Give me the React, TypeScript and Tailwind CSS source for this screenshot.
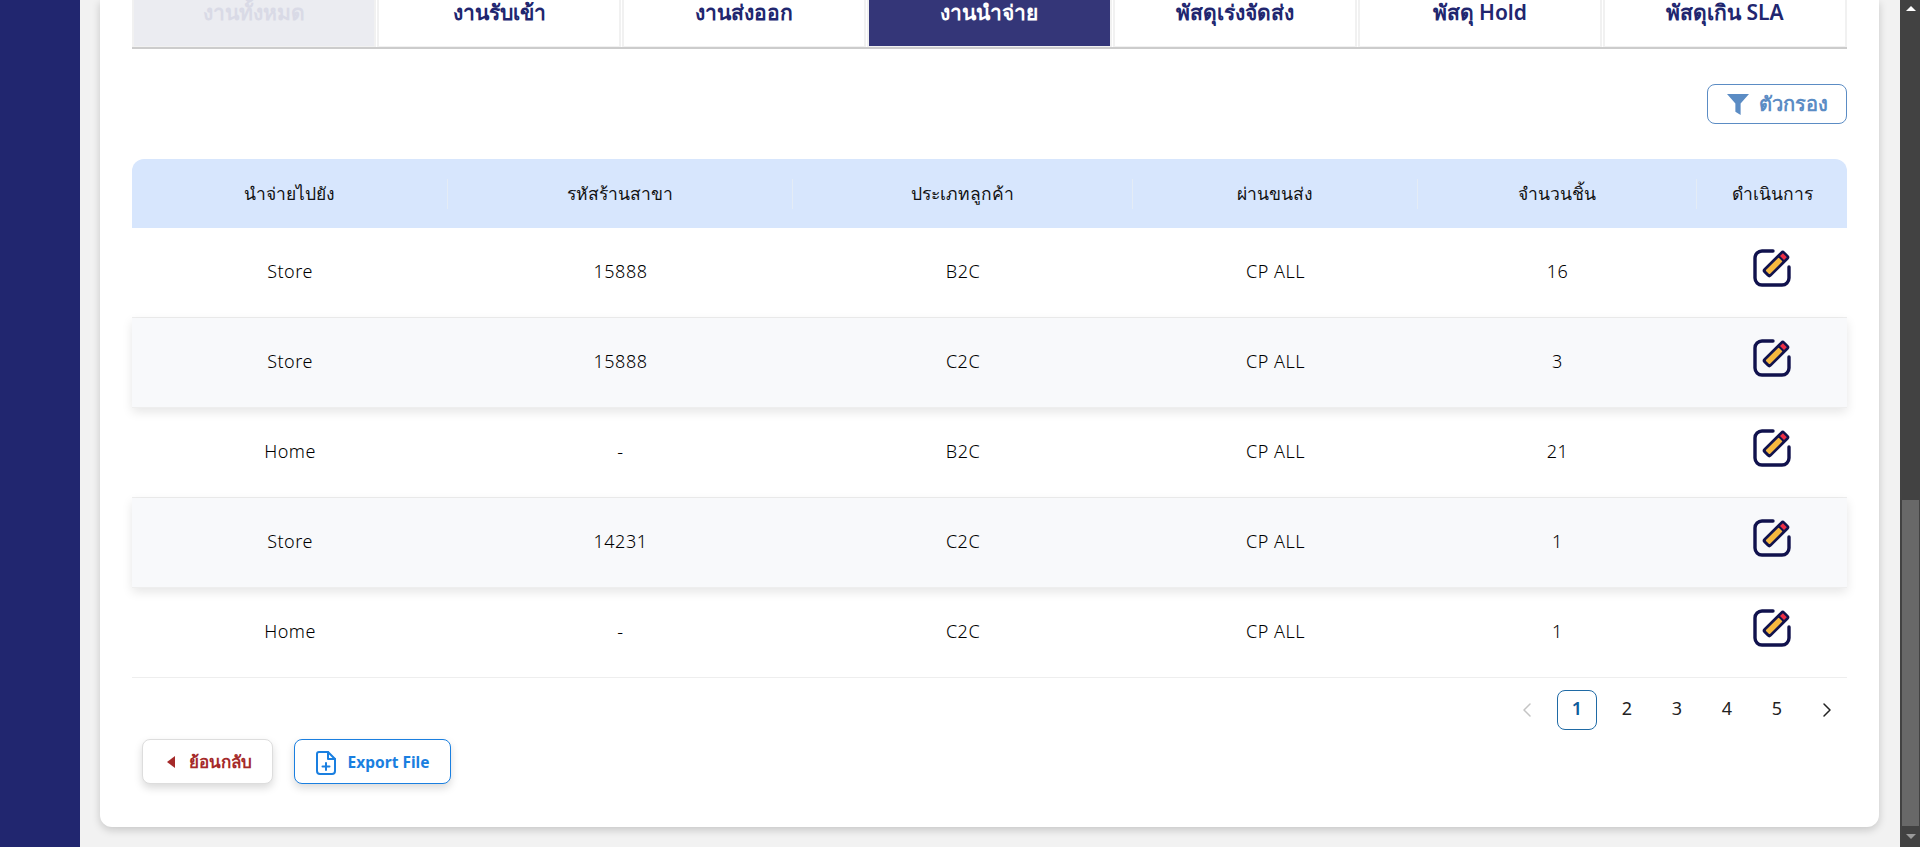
import React from "react";
import { ChevronLeft, ChevronRight } from "lucide-react";

const tabs = ["งานทั้งหมด", "งานรับเข้า", "งานส่งออก", "งานนำจ่าย", "พัสดุเร่งจัดส่ง", "พัสดุ Hold", "พัสดุเกิน SLA"];

const columns = ["นำจ่ายไปยัง", "รหัสร้านสาขา", "ประเภทลูกค้า", "ผ่านขนส่ง", "จำนวนชิ้น", "ดำเนินการ"];

const rows = [
  ["Store", "15888", "B2C", "CP ALL", "16"],
  ["Store", "15888", "C2C", "CP ALL", "3"],
  ["Home", "-", "B2C", "CP ALL", "21"],
  ["Store", "14231", "C2C", "CP ALL", "1"],
  ["Home", "-", "C2C", "CP ALL", "1"],
];

function EditIcon() {
  return (
    <svg width="38" height="38" viewBox="0 0 38 38" fill="none" className="-mt-2.5">
      <path
        d="M20 2H9a7 7 0 0 0-7 7v20a7 7 0 0 0 7 7h20a7 7 0 0 0 7-7V18"
        stroke="#11124d"
        strokeWidth="3.4"
        strokeLinecap="round"
      />
      <g transform="translate(23 15) rotate(45)">
        <rect x="-5.5" y="-15" width="11" height="30" rx="3" fill="#11124d" />
        <rect x="-2.8" y="-6.5" width="5.6" height="18.5" rx="1" fill="#f7b83f" />
        <rect x="-2.8" y="-12.5" width="5.6" height="4" fill="#ee2f45" />
      </g>
    </svg>
  );
}

export default function App() {
  return (
    <div className="flex h-screen overflow-hidden bg-[#f2f2f2] font-['Noto_Sans',sans-serif] text-[#222]">
      <div className="w-20 shrink-0 bg-[#21266f]" />

      <div className="flex-1 pl-5 pr-[21px]">
        <div className="h-[827px] rounded-b-xl bg-white px-8 shadow-[0_3px_8px_rgba(0,0,0,0.18)]">
          <div className="grid h-[49px] grid-cols-7 gap-[1px] border-b-2 border-[#cccccc]">
            {tabs.map((tab, i) => (
              <div
                key={tab}
                className={
                  "flex h-[47px] items-start justify-center border-x-2 border-b border-[#f1f1f1] text-[21px] leading-6 font-semibold " +
                  (i === 0
                    ? "bg-[#ebecf1] text-[#d9dae6]"
                    : i === 3
                      ? "border-[#5a5c92] bg-[#343678] font-bold text-white"
                      : "bg-white text-[#21266f]")
                }
              >
                {tab}
              </div>
            ))}
          </div>

          <div className="flex justify-end pt-[35px] pb-[35px]">
            <button className="flex h-10 w-[140px] items-center justify-center gap-2.5 rounded-lg border border-[#5b8cc4] text-xl font-semibold text-[#5b8cc4]">
              <svg width="22" height="22" viewBox="0 0 21 21">
                <path d="M0 1h21l-8 9v11l-5-3v-8z" fill="#5b8cc4" />
              </svg>
              ตัวกรอง
            </button>
          </div>

          <div className="grid h-[69px] grid-cols-[316px_345px_340px_285px_279px_150px] items-center rounded-t-xl bg-[#d7e6fd] text-[17.5px] font-medium text-[#111]">
            {columns.map((col, i) => (
              <div key={col} className={"flex h-[30px] items-center justify-center " + (i < 5 ? "border-r border-[#e4ecf6]" : "")}>
                {col}
              </div>
            ))}
          </div>

          {rows.map((row, i) => (
            <div
              key={i}
              className={
                "grid h-[90px] grid-cols-[316px_345px_340px_285px_279px_150px] items-center border-b border-[#eeeeee] text-lg font-light tracking-[0.5px] text-black " +
                (i % 2 === 1 ? "relative bg-[#f8f9fb] shadow-[0_4px_10px_rgba(0,0,0,0.1)]" : "bg-white")
              }
            >
              {row.map((cell, j) => (
                <div key={j} className="pb-[4px] text-center">
                  {cell}
                </div>
              ))}
              <div className="flex justify-center">
                <EditIcon />
              </div>
            </div>
          ))}

          <div className="flex justify-end gap-[10px] pt-[12px] text-lg">
            <div className="flex h-10 w-10 items-center justify-center text-[#c4c4c4]">
              <ChevronLeft size={24} strokeWidth={1.5} />
            </div>
            <div className="flex h-10 w-10 items-center justify-center rounded-lg border border-[#1f6aa5] pb-1 font-semibold text-[#0f5c9c]">1</div>
            {[2, 3, 4, 5].map((n) => (
              <div key={n} className="flex h-10 w-10 items-center justify-center pb-1">
                {n}
              </div>
            ))}
            <div className="flex h-10 w-10 items-center justify-center">
              <ChevronRight size={24} strokeWidth={1.5} />
            </div>
          </div>

          <div className="flex gap-[21px] pt-[9px] pl-[10px]">
            <button className="flex h-[45px] w-[131px] items-center justify-center gap-3.5 rounded-lg border border-[#dddddd] bg-white pl-1 text-[17px] font-semibold text-[#a52a2a] shadow-[0_4px_8px_rgba(0,0,0,0.15)]">
              <svg width="8" height="12" viewBox="0 0 8 12">
                <path d="M8 0v12L0 6z" fill="#a52a2a" />
              </svg>
              ย้อนกลับ
            </button>
            <button className="flex h-[45px] w-[157px] items-center justify-center gap-3 rounded-lg border border-[#1a7fe0] bg-white pt-[2px] text-[15.5px] font-bold text-[#1a7fe0] shadow-[0_4px_8px_rgba(0,0,0,0.15)]">
              <svg width="20" height="24" viewBox="0 0 20 24" fill="none" stroke="#1a7fe0" strokeWidth="2" strokeLinejoin="round" strokeLinecap="round">
                <path d="M3 1h9l7 7v12a3 3 0 0 1-3 3H4a3 3 0 0 1-3-3V3a2 2 0 0 1 2-2z" />
                <path d="M12 1v7h7M10 12v7M6.5 15.5h7" />
              </svg>
              Export File
            </button>
          </div>
        </div>
      </div>

      <div className="flex w-[21px] shrink-0 flex-col bg-[#424242]">
        <div className="flex h-[17px] items-center justify-center">
          <div className="h-0 w-0 border-x-[5px] border-b-[5px] border-x-transparent border-b-white" />
        </div>
        <div className="flex-1" />
        <div className="mx-0.5 h-[326px] bg-[#686868]" />
        <div className="flex h-[21px] items-center justify-center">
          <div className="h-0 w-0 border-x-[5px] border-t-[5px] border-x-transparent border-t-[#9a9a9a]" />
        </div>
      </div>
    </div>
  );
}
